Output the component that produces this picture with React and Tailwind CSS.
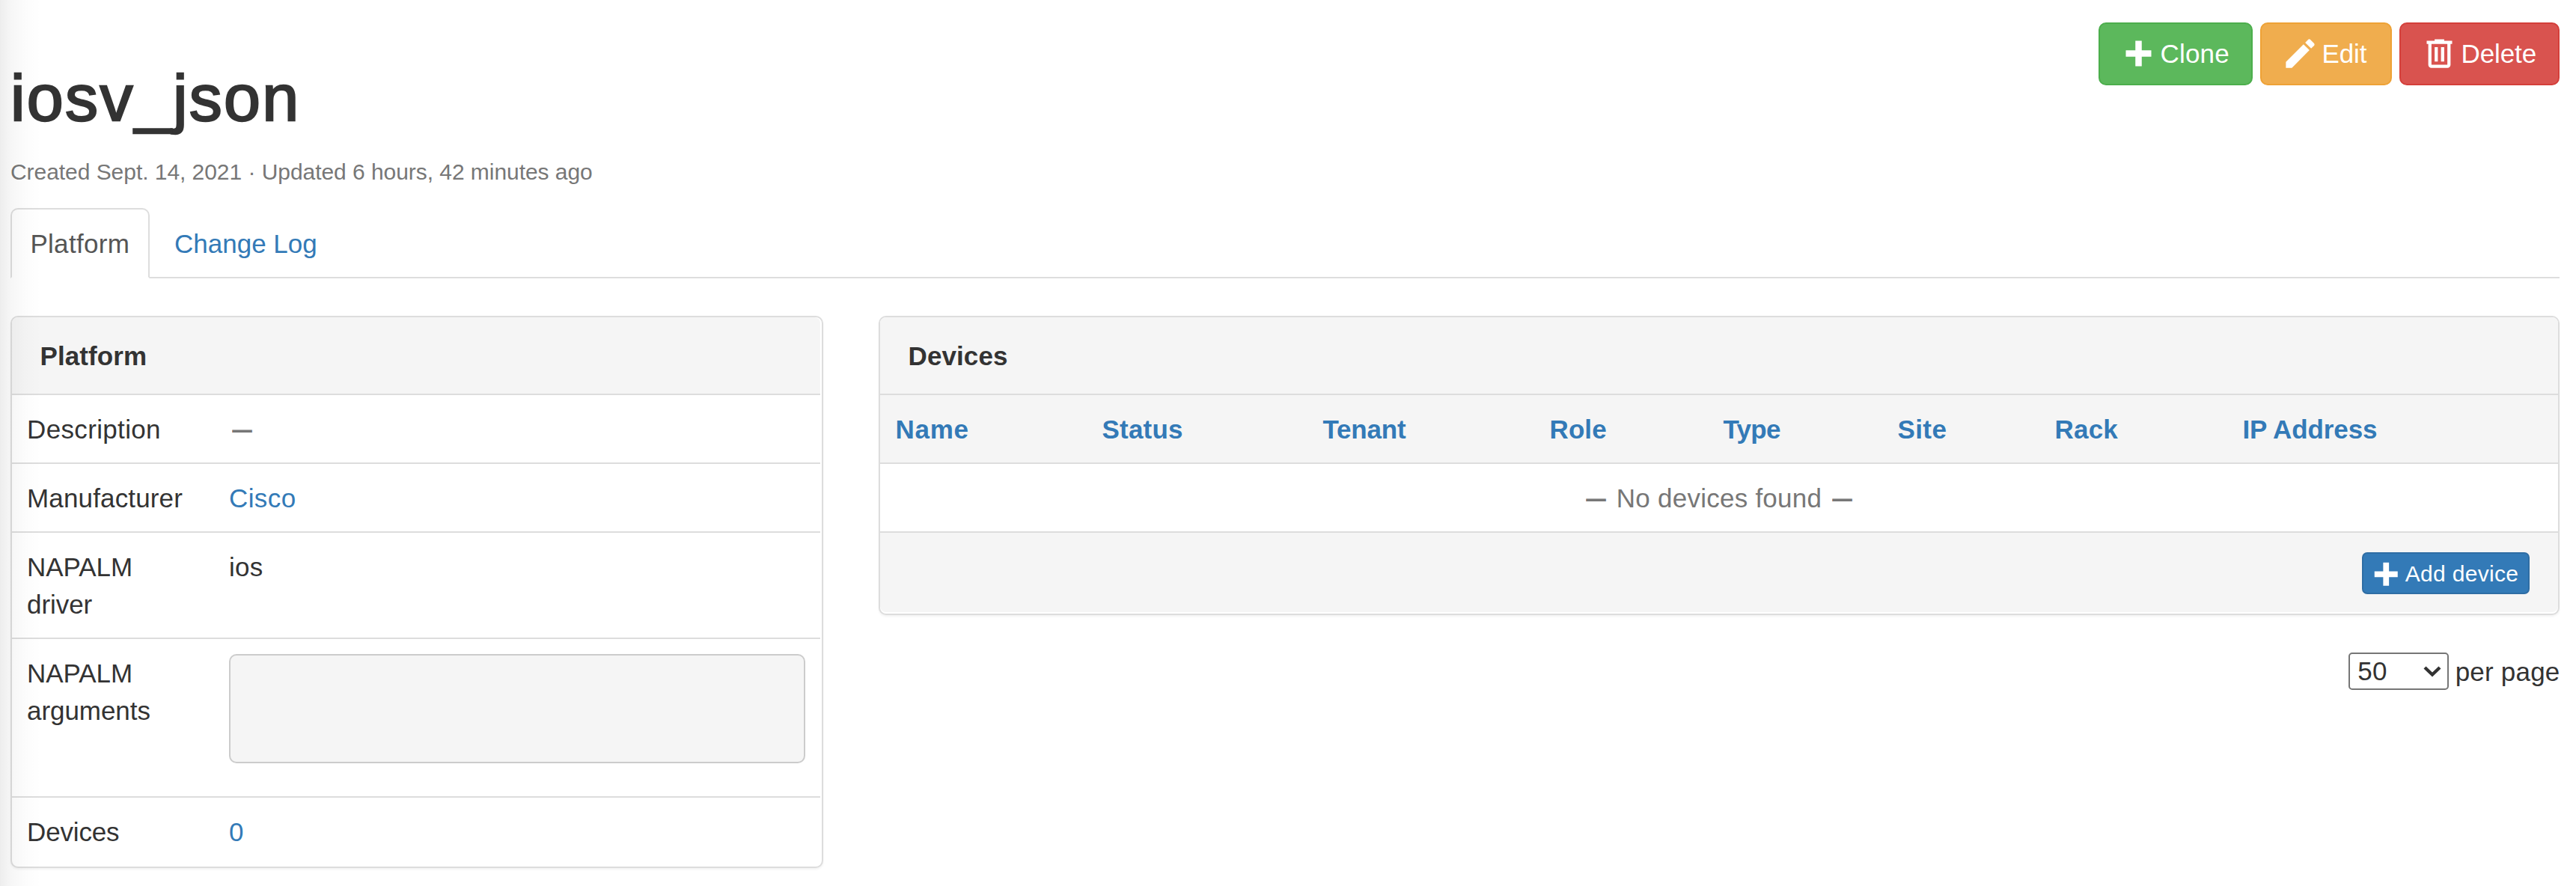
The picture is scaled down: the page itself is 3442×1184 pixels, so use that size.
import React from "react";

const PLUS = "M20 14H14V20H10V14H4V10H10V4H14V10H20V14Z";
const PENCIL =
  "M20.71,7.04C21.1,6.65 21.1,6 20.71,5.63L18.37,3.29C18,2.9 17.35,2.9 16.96,3.29L15.12,5.12L18.87,8.87M3,17.25V21H6.75L17.81,9.93L14.06,6.18L3,17.25Z";
const TRASH =
  "M9,3V4H4V6H5V19A2,2 0 0,0 7,21H17A2,2 0 0,0 19,19V6H20V4H15V3H9M7,6H17V19H7V6M9,8V17H11V8H9M13,8V17H15V8H13Z";

function Icon({ d, className }) {
  return (
    <svg viewBox="0 0 24 24" fill="currentColor" className={`shrink-0 ${className}`}>
      <path d={d} />
    </svg>
  );
}

function ActionButton({ icon, label, className }) {
  return (
    <button
      className={`flex h-[84px] items-center rounded-[10px] border-2 pl-[26px] leading-[50px] whitespace-nowrap text-white ${className}`}
    >
      <Icon d={icon} className="mr-[3.5px] size-[51px] -translate-y-px" />
      {label}
    </button>
  );
}

function Dash() {
  return <span className="inline-block scale-x-[0.76] font-bold">—</span>;
}

function Panel({ title, className, children }) {
  return (
    <section
      className={`rounded-[10px] border-2 border-[#ddd] bg-white pb-[2px] shadow-[0_2px_3px_rgba(0,0,0,0.05)] ${className}`}
    >
      <h2 className="h-[104px] rounded-t-[8px] border-b-2 border-[#ddd] bg-[#f5f5f5] pt-[27px] pr-[38px] pl-[37.5px] font-bold tracking-[0.1px]">
        {title}
      </h2>
      {children}
    </section>
  );
}

function Row({ label, className = "border-t-2", labelClass = "", valueClass = "", children }) {
  return (
    <div className={`flex border-[#ddd] ${className}`}>
      <div className={`w-[270px] shrink-0 px-5 pt-[21px] pb-[19px] ${labelClass}`}>{label}</div>
      <div className={`grow px-5 tracking-[0.3px] ${valueClass || "pt-[21px] pb-[19px]"}`}>{children}</div>
    </div>
  );
}

const COLUMNS = [
  ["Name", "w-[276px] tracking-[0.7px]"],
  ["Status", "w-[295px] tracking-[0.2px]"],
  ["Tenant", "w-[303px] tracking-[-0.2px]"],
  ["Role", "w-[232px] tracking-[0.1px]"],
  ["Type", "w-[233px] tracking-[-0.7px]"],
  ["Site", "w-[210px] tracking-[0.4px]"],
  ["Rack", "w-[251px] tracking-[0.2px]"],
  ["IP Address", "w-[442px] tracking-[-0.1px]"],
];

export default function App() {
  return (
    <div
      className={
        "relative h-[1184px] w-[3442px] overflow-hidden bg-white pr-[22px] pl-[14px] font-['Liberation_Sans',Arial,sans-serif] text-[35px] leading-[50px] text-[#333]"
      }
    >
      <header className="flex h-[250px] items-start justify-between">
        <div className="pt-[81px]">
          <h1 className="text-[88px] leading-[99px] font-normal tracking-[2.3px] [-webkit-text-stroke:2.4px_#333]">
            iosv_json
          </h1>
          <p className="mt-[29px] text-[30px] leading-[42px] tracking-[-0.05px] text-[#777]">
            Created Sept. 14, 2021 · Updated 6 hours, 42 minutes ago
          </p>
        </div>
        <div className="flex gap-2.5 pt-[30px]">
          <ActionButton
            icon={PLUS}
            label="Clone"
            className="w-[206px] border-[#4cae4c] bg-[#5cb85c] tracking-[0.2px]"
          />
          <ActionButton
            icon={PENCIL}
            label="Edit"
            className="w-[176px] border-[#eea236] bg-[#f0ad4e] tracking-[-0.1px]"
          />
          <ActionButton
            icon={TRASH}
            label="Delete"
            className="w-[214px] border-[#d43f3a] bg-[#d9534f] tracking-[-0.1px]"
          />
        </div>
      </header>

      <nav className="mt-7 flex h-[94px] border-b-2 border-[#ddd]">
        <a className="h-[94px] w-[186px] rounded-t-[10px] border-2 border-[#ddd] border-b-white bg-white pt-[21px] pl-[24.4px] tracking-[0.3px] text-[#555]">
          Platform
        </a>
        <a className="pt-[23px] pl-[33px] text-[#337ab7]">Change Log</a>
      </nav>

      <main className="mt-[50px] flex items-start gap-[74px]">
        <Panel title="Platform" className="w-[1086px] shrink-0 pr-[2px]">
          <Row label="Description" className="h-[90px]" labelClass="tracking-[0.35px]">
            <span className="text-[#777]">
              <Dash />
            </span>
          </Row>
          <Row label="Manufacturer" labelClass="tracking-[0.15px]">
            <a className="tracking-[0.4px] text-[#337ab7]">Cisco</a>
          </Row>
          <Row label="NAPALM driver" labelClass="tracking-[-0.05px]">ios</Row>
          <Row
            label="NAPALM arguments"
            className="h-[212px] border-t-2"
            labelClass="tracking-[-0.05px]"
            valueClass="pt-5"
          >
            <pre className="h-[146px] rounded-[10px] border-2 border-[#ccc] bg-[#f5f5f5]" />
          </Row>
          <Row label="Devices" labelClass="tracking-[-0.15px]">
            <a className="text-[#337ab7]">0</a>
          </Row>
        </Panel>

        <div className="w-[2246px] shrink-0">
          <Panel title="Devices" className="">
            <table className="w-full table-fixed border-collapse">
              <thead>
                <tr className="h-[90px] bg-[#f5f5f5]">
                  {COLUMNS.map(([name, cls]) => (
                    <th key={name} className={`p-0 pt-px pl-[20.5px] text-left font-bold text-[#337ab7] ${cls}`}>
                      {name}
                    </th>
                  ))}
                </tr>
              </thead>
            </table>
            <div className="border-t-2 border-[#ddd] pt-[21px] pb-[19px] text-center tracking-[0.25px] text-[#777]">
              <Dash /> No devices found <Dash />
            </div>
            <div className="flex h-[108px] justify-end rounded-b-[8px] border-t-2 border-[#ddd] bg-[#f5f5f5] pt-[26px] pr-[38px]">
              <button className="flex h-[56px] w-[224px] items-center rounded-[7px] border-2 border-[#2e6da4] bg-[#337ab7] pl-[7px] text-[30px] leading-[45px] tracking-[0.3px] whitespace-nowrap text-white">
                <Icon d={PLUS} className="mr-[2.3px] size-[46.5px] translate-y-px" />
                Add device
              </button>
            </div>
          </Panel>

          <div className="mt-[50px] flex justify-end gap-[8.7px]">
            <div className="flex h-[50px] w-[134px] items-center justify-between rounded-[5px] border-2 border-[#767676] bg-white pr-[8px] pl-[10.3px] tracking-[0.2px]">
              50
              <svg viewBox="0 0 24 16" className="h-4 w-6" fill="none" stroke="#333" strokeWidth="4.4">
                <path d="M2 3L12 12.5L22 3" />
              </svg>
            </div>
            <span className="w-[139.3px] pt-px tracking-[0.2px] whitespace-nowrap">per page</span>
          </div>
        </div>
      </main>

      <div className="pointer-events-none absolute inset-y-0 left-0 w-14 bg-[linear-gradient(to_right,rgba(0,0,0,0.07),rgba(0,0,0,0.035)_25%,rgba(0,0,0,0.012)_62%,transparent)]" />
    </div>
  );
}
